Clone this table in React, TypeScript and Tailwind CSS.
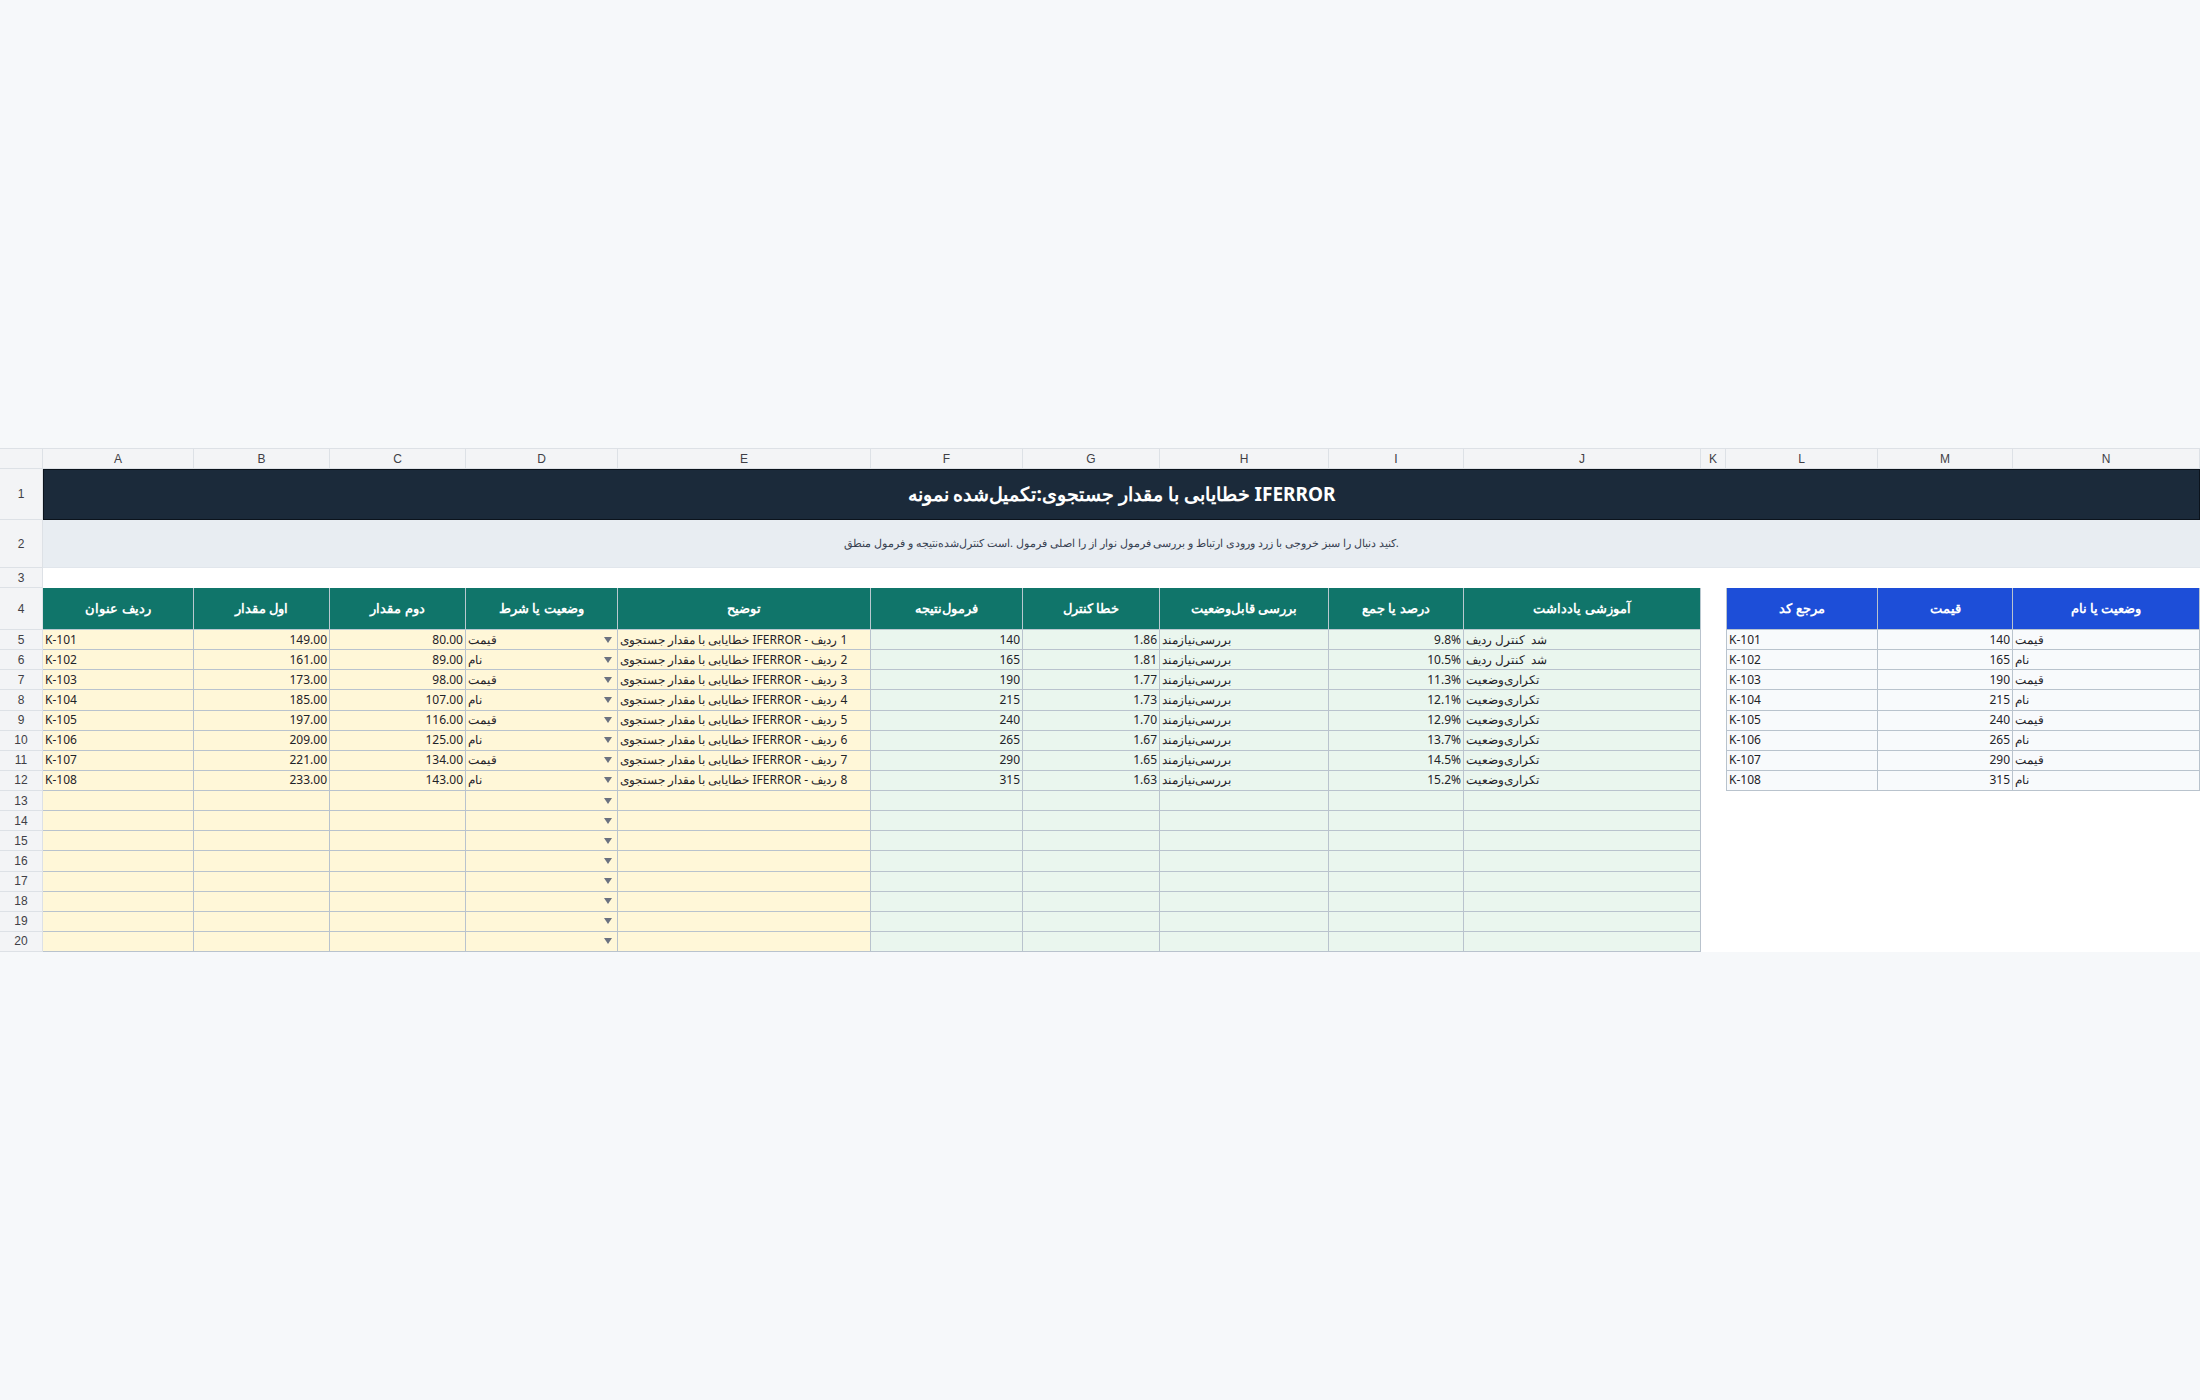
import React from "react";

const LETTERS = ["A", "B", "C", "D", "E", "F", "G", "H", "I", "J", "K", "L", "M", "N"];

const B = [149, 161, 173, 185, 197, 209, 221, 233];
const C = [80, 89, 98, 107, 116, 125, 134, 143];
const F = [140, 165, 190, 215, 240, 265, 290, 315];
const G = ["1.86", "1.81", "1.77", "1.73", "1.70", "1.67", "1.65", "1.63"];
const I = ["9.8%", "10.5%", "11.3%", "12.1%", "12.9%", "13.7%", "14.5%", "15.2%"];
const D = ["قیمت", "نام", "قیمت", "نام", "قیمت", "نام", "قیمت", "نام"];

const rowHdr =
  "flex items-center justify-center bg-[#f3f4f6] border-r border-b border-[#dde1e6] text-[12px] text-[#3f3f46] font-['Liberation_Sans',Arial,sans-serif]";
const yCell = "flex items-center bg-[#fff7d8] border-r border-b border-[#b9c3cd] px-[2px] overflow-hidden whitespace-nowrap";
const gCell = "flex items-center bg-[#eaf6ee] border-r border-b border-[#b9c3cd] px-[2px] overflow-hidden whitespace-nowrap";
const lCell = "flex items-center bg-[#f8fafc] border-r border-b border-[#b9c3cd] px-[2px] overflow-hidden whitespace-nowrap";
const teal =
  "flex items-center justify-center bg-[#10756a] border-r border-b border-[#b9c8cf] text-white font-bold text-[13px] whitespace-nowrap";
const blue =
  "flex items-center justify-center bg-[#1d4ed8] border-r border-b border-[#b9c3cd] text-white font-bold text-[13px] whitespace-nowrap";

function Arrow() {
  return (
    <svg width="8" height="6" viewBox="0 0 8 6" className="shrink-0">
      <path d="M0 0H8L4 6Z" fill="#6b7280" />
    </svg>
  );
}

function Rtl({ children }: { children: React.ReactNode }) {
  return <span dir="rtl">{children}</span>;
}

export default function App() {
  const dataRows = Array.from({ length: 8 }, (_, i) => i);
  const emptyRows = Array.from({ length: 8 }, (_, i) => i + 13);

  return (
    <div className="w-[2200px] h-[1400px] bg-[#f6f8fa] flex items-center overflow-hidden font-['Noto_Sans',sans-serif] text-[12px] text-[#1f2328]">
      <div className="grid w-[2200px] bg-white grid-cols-[43px_151px_136px_136px_152px_253px_152px_137px_169px_135px_237px_25px_152px_135px_187px] grid-rows-[21px_51px_48px_20px_42px_repeat(16,20.125px)]">
        {/* column header row */}
        <div className="bg-[#f3f4f6] border-t border-r border-b border-[#dde1e6]" />
        {LETTERS.map((l) => (
          <div
            key={l}
            className="flex items-center justify-center bg-[#f3f4f6] border-t border-r border-b border-[#dde1e6] text-[12px] text-[#3f3f46] font-['Liberation_Sans',Arial,sans-serif]"
          >
            {l}
          </div>
        ))}

        {/* row 1 title */}
        <div className={rowHdr}>1</div>
        <div className="col-span-14 flex items-center justify-center bg-[#1b2a3a] border border-[#0b131c]">
          <span dir="rtl" className="text-white font-bold text-[19px]">
            IFERROR خطایابی با مقدار جستجوی:تکمیل‌شده نمونه
          </span>
        </div>

        {/* row 2 subtitle */}
        <div className={rowHdr}>2</div>
        <div className="col-span-14 flex items-center justify-center bg-[#e8edf2] border-b border-[#e1e6ec]">
          <span dir="rtl" className="text-[11.25px] text-[#374151]">
            .کنید دنبال را سبز خروجی با زرد ورودی ارتباط و بررسی فرمول نوار از را اصلی فرمول .است کنترل‌شده‌نتیجه و فرمول منطق
          </span>
        </div>

        {/* row 3 */}
        <div className={rowHdr}>3</div>
        <div className="col-span-14 bg-white" />

        {/* row 4 headers */}
        <div className={rowHdr}>4</div>
        <div className={teal}><Rtl>ردیف عنوان</Rtl></div>
        <div className={teal}><Rtl>اول مقدار</Rtl></div>
        <div className={teal}><Rtl>دوم مقدار</Rtl></div>
        <div className={teal}><Rtl>وضعیت یا شرط</Rtl></div>
        <div className={teal}><Rtl>توضیح</Rtl></div>
        <div className={teal}><Rtl>فرمول‌نتیجه</Rtl></div>
        <div className={teal}><Rtl>خطا کنترل</Rtl></div>
        <div className={teal}><Rtl>بررسی قابل‌وضعیت</Rtl></div>
        <div className={teal}><Rtl>درصد یا جمع</Rtl></div>
        <div className={teal}><Rtl>آموزشی یادداشت</Rtl></div>
        <div className="bg-white" />
        <div className={blue + " border-l"}><Rtl>مرجع کد</Rtl></div>
        <div className={blue}><Rtl>قیمت</Rtl></div>
        <div className={blue}><Rtl>وضعیت یا نام</Rtl></div>

        {/* rows 5-12 */}
        {dataRows.map((i) => (
          <React.Fragment key={i}>
            <div className={rowHdr}>{i + 5}</div>
            <div className={yCell + " justify-start"}>K-{101 + i}</div>
            <div className={yCell + " justify-end"}>{B[i].toFixed(2)}</div>
            <div className={yCell + " justify-end"}>{C[i].toFixed(2)}</div>
            <div className={yCell + " justify-between pr-[5px]"}>
              <Rtl>{D[i]}</Rtl>
              <Arrow />
            </div>
            <div className={yCell + " justify-start"}>
              <Rtl>{`${i + 1} ردیف - IFERROR خطایابی با مقدار جستجوی`}</Rtl>
            </div>
            <div className={gCell + " justify-end"}>{F[i]}</div>
            <div className={gCell + " justify-end"}>{G[i]}</div>
            <div className={gCell + " justify-start"}>
              <Rtl>بررسی‌نیازمند</Rtl>
            </div>
            <div className={gCell + " justify-end"}>{I[i]}</div>
            <div className={gCell + " justify-start"}>
              <Rtl>{i < 2 ? "شد\u00a0 کنترل ردیف" : "تکراری‌وضعیت"}</Rtl>
            </div>
            <div className="bg-white" />
            <div className={lCell + " justify-start border-l"}>K-{101 + i}</div>
            <div className={lCell + " justify-end"}>{F[i]}</div>
            <div className={lCell + " justify-start"}>
              <Rtl>{D[i]}</Rtl>
            </div>
          </React.Fragment>
        ))}

        {/* rows 13-20 */}
        {emptyRows.map((r) => (
          <React.Fragment key={r}>
            <div className={rowHdr}>{r}</div>
            <div className={yCell} />
            <div className={yCell} />
            <div className={yCell} />
            <div className={yCell + " justify-end pr-[5px]"}>
              <Arrow />
            </div>
            <div className={yCell} />
            <div className={gCell} />
            <div className={gCell} />
            <div className={gCell} />
            <div className={gCell} />
            <div className={gCell} />
            <div className="col-span-4 bg-white" />
          </React.Fragment>
        ))}
      </div>
    </div>
  );
}
